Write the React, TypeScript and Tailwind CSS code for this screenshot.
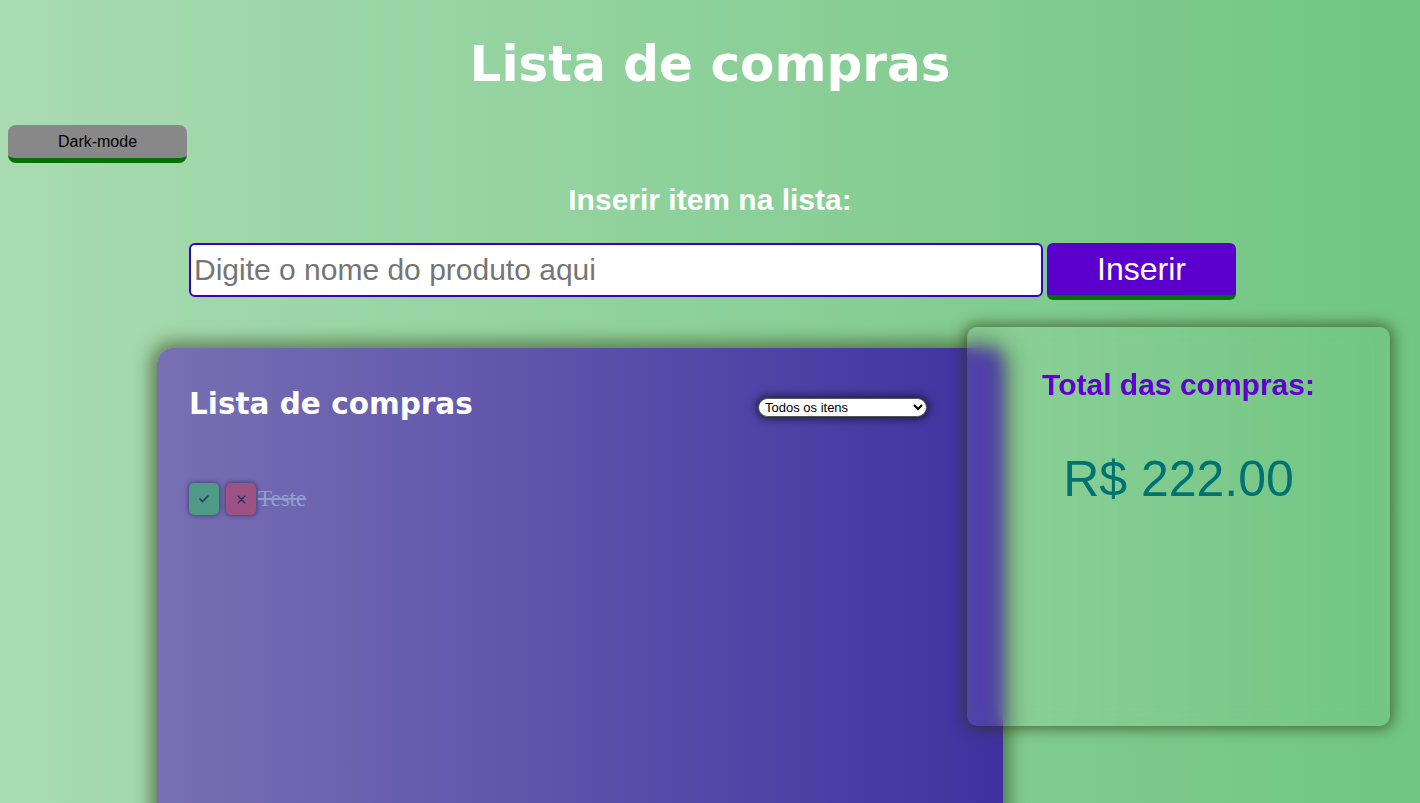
import React from "react";

const App = () => {
  const items = [{ name: "Teste", done: true }];

  return (
    <div className="min-h-screen bg-[linear-gradient(to_right,#a9dbb1,#71c682)] font-['Liberation_Sans',Arial,sans-serif] pb-10">
      <h1 className="pt-[36px] text-center font-['DejaVu_Sans',Verdana,sans-serif] text-[50px] font-bold leading-[56px] text-white">
        Lista de compras
      </h1>

      <div className="mt-[33px] pl-[8px]">
        <button className="h-[38px] w-[179px] rounded-[8px] border-b-[5px] border-[#037103] bg-[#888888] text-[16px] text-black">
          Dark-mode
        </button>
      </div>

      <h2 className="mt-[20px] text-center text-[30px] font-bold leading-[34px] text-white">
        Inserir item na lista:
      </h2>

      <div className="mt-[26px] flex justify-center gap-[4px] pl-[5px]">
        <input
          className="h-[54px] w-[854px] rounded-[6px] border-2 border-[#3b00bd] bg-white px-[3px] text-[30px] text-black outline-none placeholder:text-[#757575]"
          placeholder="Digite o nome do produto aqui"
        />
        <button className="h-[57px] w-[189px] rounded-[6px] border-b-[5px] border-[#037103] bg-[#5b00cc] text-[32px] text-white">
          Inserir
        </button>
      </div>

      <div className="mt-[27px] flex items-start pl-[157px]">
        <section className="mt-[21px] min-h-[520px] w-[846px] shrink-0 rounded-[16px] bg-[linear-gradient(to_right,#7870b4,#4131a0)] px-[32px] pt-[36px] shadow-[0_0_18px_6px_rgba(40,50,10,0.55)]">
          <div className="flex items-center justify-between">
            <h3 className="font-['DejaVu_Sans',Verdana,sans-serif] text-[29.5px] font-bold leading-[40px] text-white">
              Lista de compras
            </h3>
            <select className="mr-[44px] mt-[6px] h-[19px] w-[169px] rounded-full border border-[#555] bg-white px-[2px] text-[13px] text-black shadow-[0_0_8px_2px_rgba(0,0,0,0.6)]">
              <option>Todos os itens</option>
              <option>Comprados</option>
              <option>Não comprados</option>
            </select>
          </div>

          <ul className="mt-[58px] flex flex-col gap-2">
            {items.map((item, i) => (
              <li key={i} className="flex items-center">
                <button className="flex h-[32px] w-[30px] items-center justify-center rounded-[5px] bg-[#4f9a86] shadow-[0_0_4px_1px_rgba(40,40,80,0.6)]">
                  <svg width="12" height="12" viewBox="0 0 24 24" fill="none" stroke="#2b2f5e" strokeWidth="3" strokeLinecap="round" strokeLinejoin="round">
                    <path d="M4 12l5 5L20 6" />
                  </svg>
                </button>
                <button className="ml-[7px] flex h-[32px] w-[30px] items-center justify-center rounded-[5px] bg-[#9d5283] shadow-[0_0_4px_1px_rgba(40,40,80,0.6)]">
                  <svg width="11" height="11" viewBox="0 0 24 24" fill="none" stroke="#2b2f5e" strokeWidth="3" strokeLinecap="round">
                    <path d="M5 5l14 14M19 5L5 19" />
                  </svg>
                </button>
                <span
                  className={`ml-[2px] font-['Liberation_Serif','Times_New_Roman',serif] text-[23px] text-[#8d9fcf] ${
                    item.done ? "line-through" : ""
                  }`}
                >
                  {item.name}
                </span>
              </li>
            ))}
          </ul>
        </section>

        <aside className="relative -ml-[36px] h-[399px] w-[423px] shrink-0 rounded-[10px] bg-[linear-gradient(to_right,rgba(255,255,255,0.08),rgba(255,255,255,0))] pt-[40px] text-center shadow-[0_0_14px_3px_rgba(40,50,10,0.6)] backdrop-blur-[8px]">
          <h2 className="text-[30px] font-bold leading-[36px] text-[#6100d1]">Total das compras:</h2>
          <p className="mt-[46px] text-[50px] leading-[60px] text-[#017272]">R$ 222.00</p>
        </aside>
      </div>
    </div>
  );
};

export default App;
